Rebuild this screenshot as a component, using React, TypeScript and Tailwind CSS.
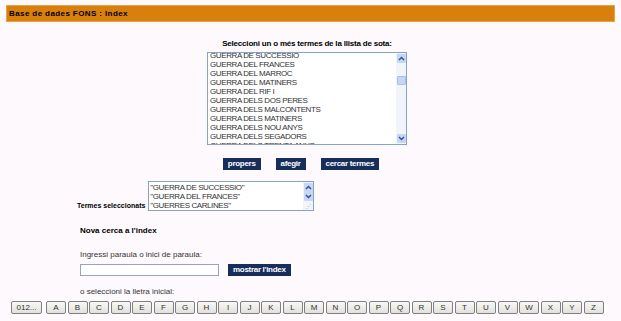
const TERMS = [
  "GUERRA DE SUCCESSIO",
  "GUERRA DEL FRANCES",
  "GUERRA DEL MARROC",
  "GUERRA DEL MATINERS",
  "GUERRA DEL RIF I",
  "GUERRA DELS DOS PERES",
  "GUERRA DELS MALCONTENTS",
  "GUERRA DELS MATINERS",
  "GUERRA DELS NOU ANYS",
  "GUERRA DELS SEGADORS",
  "GUERRA DELS TRENTA ANYS",
];

const SELECTED = ['"GUERRA DE SUCCESSIO"', '"GUERRA DEL FRANCES"', '"GUERRES CARLINES"'];

const LETTERS = "ABCDEFGHIJKLMNOPQRSTUVWXYZ".split("");

function Arrow({ up }: { up?: boolean }) {
  return (
    <div className="flex h-[9px] w-[9px] items-center justify-center rounded-[1px] bg-[#c6d6f3]">
      <svg width="7" height="5" viewBox="0 0 7 5">
        <path d={up ? "M1 4 L3.5 1.5 L6 4" : "M1 1 L3.5 3.5 L6 1"} fill="none" stroke="#2f4f96" strokeWidth="1.4" />
      </svg>
    </div>
  );
}

function NavyButton({ children }: { children: React.ReactNode }) {
  return (
    <button className="h-[12px] bg-[#172d5c] px-[5px] text-[8px] leading-[12px] font-bold tracking-[-0.3px] text-white">
      {children}
    </button>
  );
}

export default function App() {
  return (
    <div className="h-[321px] w-[621px] overflow-hidden bg-[#fdf9fd] font-['Liberation_Sans',Arial,sans-serif] text-black">
      <div className="mx-[6px] mt-[5px] flex h-[17px] items-center border border-[#e9a24a] bg-[#d97f0b] px-[2px] text-[8px] font-bold tracking-[0.4px]">
        Base de dades FONS : Index
      </div>

      <div className="mt-[17px] flex flex-col items-center pr-[7px]">
        <p className="text-[8px] leading-[10px] font-bold tracking-[-0.2px]">
          Seleccioni un o més termes de la llista de sota:
        </p>
        <div className="mt-[3px] flex h-[93px] w-[200px] overflow-hidden border border-[#8aa1c6] bg-white">
          <div className="flex-1 overflow-hidden pl-[2px]">
            <div className="-mt-[2px] text-[8px] leading-[9px] tracking-[-0.4px] text-[#333]">
              {TERMS.map((t) => (
                <div key={t}>{t}</div>
              ))}
            </div>
          </div>
          <div className="flex w-[10px] flex-col items-center justify-between bg-[#f1f4fa] py-[1px]">
            <div className="flex flex-col items-center">
              <Arrow up />
              <div className="mt-[13px] h-[9px] w-[9px] rounded-[1px] border border-[#aabfe8] bg-[#c6d6f3]" />
            </div>
            <Arrow />
          </div>
        </div>
        <div className="mt-[13px] mr-[12px] flex gap-[15px]">
          <NavyButton>propers</NavyButton>
          <NavyButton>afegir</NavyButton>
          <NavyButton>cercar termes</NavyButton>
        </div>
      </div>

      <div className="mt-[11px] flex items-end pl-[77px]">
        <span className="mb-[1px] mr-[3px] text-[7px] leading-[9px] font-bold">Termes seleccionats</span>
        <div className="flex h-[30px] w-[166px] border border-[#8aa1c6] bg-white">
          <div className="flex-1 pl-[1px] pt-[1px] text-[8px] leading-[9px] tracking-[-0.4px] text-[#333]">
            {SELECTED.map((s) => (
              <div key={s}>{s}</div>
            ))}
          </div>
          <div className="flex w-[10px] flex-col items-center bg-[#f1f4fa] pt-[1px]">
            <Arrow up />
            <Arrow />
            <div className="mt-auto mb-[1px] text-[5px] leading-[5px] text-[#999]">⋰</div>
          </div>
        </div>
      </div>

      <div className="pl-[80px]">
        <p className="mt-[15px] text-[8px] leading-[10px] font-bold">Nova cerca a l'index</p>
        <p className="mt-[14px] text-[8px] leading-[10px] text-[#333]">Ingressi paraula o inici de paraula:</p>
        <div className="mt-[4px] flex items-center gap-[9px]">
          <div className="h-[12px] w-[139px] border border-[#9aa4b4] bg-white" />
          <NavyButton>mostrar l'index</NavyButton>
        </div>
        <p className="mt-[11px] text-[8px] leading-[10px] text-[#333]">o seleccioni la lletra inicial:</p>
      </div>

      <div className="mt-[4px] flex gap-[1.5px] pl-[11px]">
        <button className="h-[13px] w-[31px] rounded-[2px] border border-[#808080] bg-gradient-to-b from-[#f8f8f6] to-[#e2e1dc] text-[8px] leading-[11px] text-[#333]">
          012...
        </button>
        <div className="w-[1px]" />
        {LETTERS.map((l) => (
          <button
            key={l}
            className="h-[13px] w-[20px] rounded-[2px] border border-[#808080] bg-gradient-to-b from-[#f8f8f6] to-[#e2e1dc] text-[8px] leading-[11px] text-[#333]"
          >
            {l}
          </button>
        ))}
      </div>
    </div>
  );
}
